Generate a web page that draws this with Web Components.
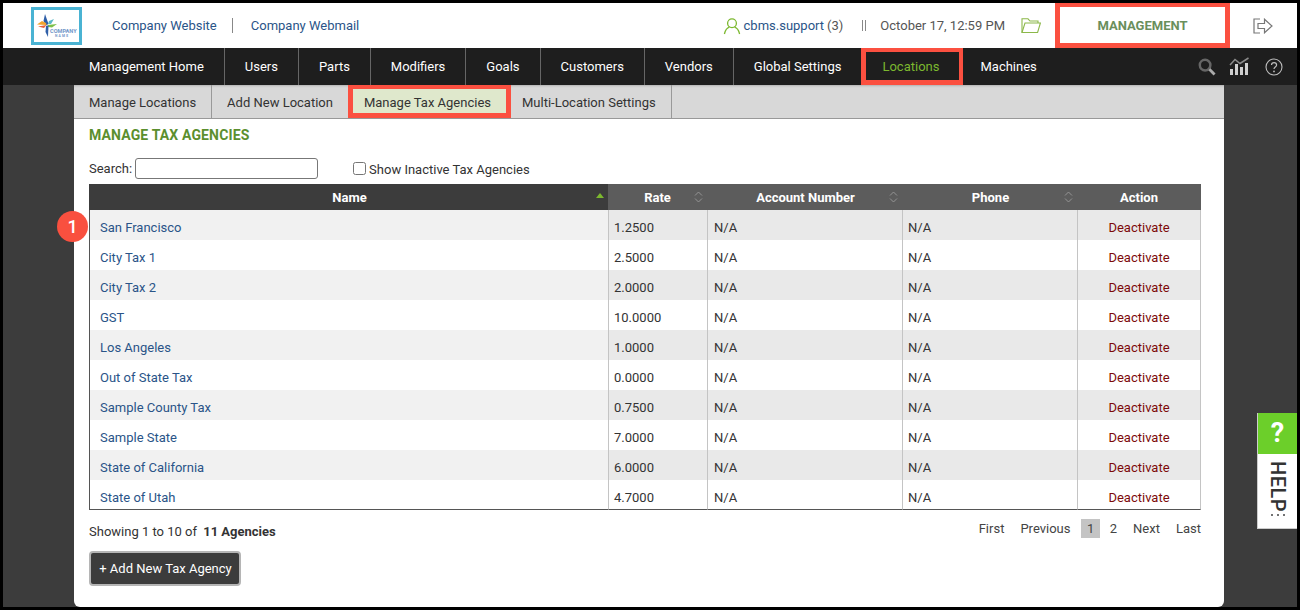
<!DOCTYPE html>
<html>
<head>
<meta charset="utf-8">
<title>Manage Tax Agencies</title>
<style>
    html, body { margin: 0; height: 100%; background: #000; }
    body { font-family: Roboto, "Liberation Sans", sans-serif; font-size: 13px; color: #333; overflow: hidden; }
</style>
</head>
<body>
<app-shell>
    <top-bar></top-bar>
    <main-nav></main-nav>
    <page-card>
        <sub-tabs></sub-tabs>
        <tax-agencies></tax-agencies>
    </page-card>
    <step-badge>1</step-badge>
    <help-tab></help-tab>
</app-shell>

<script>
function makeTemplate(html) {
    const t = document.createElement('template');
    t.innerHTML = html;
    return t;
}

class Base extends HTMLElement {
    constructor() {
        super();
        this.attachShadow({ mode: 'open' });
        this.shadowRoot.appendChild(this.constructor.template.content.cloneNode(true));
    }
}

class AppShell extends Base {
    static template = makeTemplate(`
<style>
    :host {
        display: flex;
        flex-direction: column;
        position: relative;
        box-sizing: border-box;
        width: 1300px;
        height: 610px;
        padding: 3px 3px 3px 3px;
        background: #000;
        overflow: hidden;
    }
</style>
<slot></slot>`);
}

class TopBar extends Base {
    static template = makeTemplate(`
<style>
    :host {
        display: flex;
        align-items: center;
        height: 45px;
        flex: none;
        background: #fff;
        font-size: 13px;
    }
    a { color: #2a5488; text-decoration: none; }
    .logo {
        box-sizing: border-box;
        width: 51px;
        height: 38px;
        margin: 0 30px 0 28px;
        border: 3px solid #4ab3d3;
        background: #fff;
        display: block;
    }
    .sep { width: 1px; height: 15px; background: #888; margin: 0 18px 0 15px; }
    .spacer { flex: 1; }
    .user { display: flex; align-items: center; color: #2a5488; }
    .user svg { margin-right: 3px; }
    .user span { color: #555; margin-left: 3px; }
    .bars { width: 4px; height: 11px; border-left: 1px solid #888; border-right: 1px solid #888; margin: 0 14px 0 19px; box-sizing: border-box; }
    .date { color: #555; }
    .folder { margin: 0 14px 0 16px; display: block; }
    .mode {
        box-sizing: border-box;
        width: 175px;
        height: 45px;
        border: solid #fb5040;
        border-width: 4px 5px 5px 5px;
        color: #6a8f5c;
        font-weight: 700;
        display: flex;
        align-items: center;
        justify-content: center;
    }
    .logout { margin: 0 24px 0 23px; display: block; }
</style>
<svg class="logo" viewBox="0 0 45 32" aria-hidden="true">
    <path d="M11 4 L14.5 14 L12 15.5 L9.5 11 Z" fill="#2f5fa8"/>
    <path d="M3 14.5 L8 11 L12 13 L12.5 15 Z" fill="#f2a32e"/>
    <path d="M4 16.5 L12.5 15 L10 18 Z" fill="#e4603c"/>
    <path d="M13.5 15 L23 14 L18 17.5 L14 17 Z" fill="#7cc04a"/>
    <path d="M15 11 L20 9 L17 14 L14 14 Z" fill="#5bb8c8"/>
    <path d="M12 16 L14.5 15.5 L14 27 L11.5 22 Z" fill="#2f5fa8"/>
    <text x="16" y="23" font-family="Roboto, sans-serif" font-size="5.6" font-weight="700" fill="#6f95c8">COMPANY</text>
    <text x="21" y="26.6" font-family="Roboto, sans-serif" font-size="3.4" font-weight="700" letter-spacing="1.2" fill="#6f95c8">NAME</text>
</svg>
<a href="#">Company Website</a>
<div class="sep"></div>
<a href="#">Company Webmail</a>
<div class="spacer"></div>
<div class="user">
    <svg width="18" height="18" viewBox="0 0 18 18" fill="none" stroke="#7cb82f" stroke-width="1.3" aria-hidden="true">
        <circle cx="9" cy="6.2" r="4.4"/>
        <path d="M1.4 17 C2.4 12.6 5 10.6 6.4 10.2 M16.6 17 C15.6 12.6 13 10.6 11.6 10.2"/>
    </svg>
    cbms.support<span>(3)</span>
</div>
<div class="bars"></div>
<div class="date">October 17, 12:59 PM</div>
<svg class="folder" width="20" height="17" viewBox="0 0 20 17" fill="none" stroke="#8cb84a" stroke-width="1.1" aria-hidden="true">
    <path d="M1 15.5 V1.8 H7 L9 4 H17 V6"/>
    <path d="M1 15.5 L4 6 H19.4 L16.6 15.5 Z"/>
</svg>
<div class="mode">MANAGEMENT</div>
<svg class="logout" width="20" height="16" viewBox="0 0 20 16" fill="none" stroke="#777" stroke-width="1.2" aria-hidden="true">
    <path d="M7 1 H1 V15 H7"/>
    <path d="M5 5.5 H11.5 V1.2 L19 8 L11.5 14.8 V10.5 H5 Z"/>
</svg>`);
}

class MainNav extends Base {
    static template = makeTemplate(`
<style>
    :host {
        display: flex;
        align-items: stretch;
        flex: none;
        height: 37px;
        padding-left: 66px;
        background: #1e1e1e;
        font-size: 13px;
    }
    a {
        display: flex;
        align-items: center;
        padding: 0 20px;
        color: #fff;
        text-decoration: none;
        border-right: 1px solid #666;
    }
    a.active {
        box-sizing: border-box;
        padding: 0 20px 0 16px;
        border: solid #fb5040;
        border-width: 4px 4px 5px 5px;
        color: #7cb82f;
    }
    a.prev, a.last { border-right: 0; }
    a.last { padding-left: 17px; }
    .tools { margin-left: auto; display: flex; align-items: center; padding-right: 14px; }
    svg { display: block; }
    .s { margin-right: 13px; }
    .c { margin-right: 15px; }
</style>
<a href="#">Management Home</a>
<a href="#">Users</a>
<a href="#">Parts</a>
<a href="#">Modifiers</a>
<a href="#">Goals</a>
<a href="#">Customers</a>
<a href="#">Vendors</a>
<a href="#" class="prev">Global Settings</a>
<a href="#" class="active">Locations</a>
<a href="#" class="last">Machines</a>
<div class="tools">
    <svg class="s" width="18" height="18" viewBox="0 0 19 19" fill="none" aria-hidden="true">
        <circle cx="7.5" cy="7.5" r="5.6" stroke="#666" stroke-width="2.6"/>
        <path d="M12 12 L17.5 17.5" stroke="#aaa" stroke-width="3"/>
    </svg>
    <svg class="c" width="21" height="19" viewBox="0 0 21 19" aria-hidden="true">
        <path d="M1 8 L6 2.5 L11 6.5 L19.5 1" fill="none" stroke="#8a8a8a" stroke-width="1.5"/>
        <g fill="#cfcfcf">
            <rect x="1" y="12" width="3" height="6"/>
            <rect x="6" y="7" width="3" height="11"/>
            <rect x="11" y="10" width="3" height="8"/>
            <rect x="16" y="6" width="3" height="12"/>
        </g>
    </svg>
    <svg width="18" height="18" viewBox="0 0 18 18" aria-hidden="true">
        <circle cx="9" cy="9" r="8" fill="none" stroke="#bdbdbd" stroke-width="1.1"/>
        <path d="M6.5 7 C6.5 3.9 11.6 3.9 11.6 7 C11.6 9 9 9 9 11" fill="none" stroke="#bdbdbd" stroke-width="1.2"/>
        <circle cx="9" cy="13.4" r="0.9" fill="#bdbdbd"/>
    </svg>
</div>`);
}

class PageCard extends Base {
    static template = makeTemplate(`
<style>
    :host {
        display: block;
        flex: 1;
        background: #3c3c3c;
        padding: 0 73px 0 71px;
        min-height: 0;
    }
    .card {
        height: 100%;
        background: #fff;
        border-radius: 0 0 6px 6px;
        overflow: hidden;
    }
</style>
<div class="card"><slot></slot></div>`);
}

class SubTabs extends Base {
    static template = makeTemplate(`
<style>
    :host {
        display: flex;
        height: 34px;
        box-sizing: border-box;
        background: #d8d8d8;
        border-bottom: 1px solid #999;
        font-size: 13px;
        box-shadow: inset 0 3px 3px -3px #888;
    }
    a {
        display: flex;
        align-items: center;
        padding: 2px 15px 0;
        color: #333;
        text-decoration: none;
        border-right: 1px solid #999;
    }
    a.active {
        box-sizing: border-box;
        height: 33px;
        margin-left: -1px;
        padding: 2px 15px 0 11px;
        border: 5px solid #fb5040;
        border-top-width: 4px;
        background: #dfe8cc;
    }
    a.next { padding-left: 11px; }
</style>
<a href="#">Manage Locations</a>
<a href="#">Add New Location</a>
<a href="#" class="active">Manage Tax Agencies</a>
<a href="#" class="next">Multi-Location Settings</a>`);
}

const AGENCIES = [
    ['San Francisco', '1.2500'],
    ['City Tax 1', '2.5000'],
    ['City Tax 2', '2.0000'],
    ['GST', '10.0000'],
    ['Los Angeles', '1.0000'],
    ['Out of State Tax', '0.0000'],
    ['Sample County Tax', '0.7500'],
    ['Sample State', '7.0000'],
    ['State of California', '6.0000'],
    ['State of Utah', '4.7000'],
];

const SORT_ICON = `<svg class="sort" width="9" height="12" viewBox="0 0 9 12" fill="none" stroke="#9a9a9a" stroke-width="0.9" aria-hidden="true"><path d="M1 4.5 L4.5 1 L8 4.5 M1 7.5 L4.5 11 L8 7.5"/></svg>`;

class TaxAgencies extends Base {
    static template = makeTemplate(`
<style>
    :host { display: block; padding: 0 23px 0 15px; font-size: 13px; color: #333; }
    h1 {
        margin: 0;
        padding-top: 8px;
        height: 24px;
        font-size: 14px;
        line-height: 17px;
        font-weight: 700;
        letter-spacing: 0.15px;
        color: #5b8f2e;
    }
    .filters { display: flex; align-items: center; height: 23px; margin-top: 6px; }
    .filters input[type=text] {
        box-sizing: border-box;
        width: 183px;
        height: 21px;
        margin: 0 0 0 3px;
        border: 1px solid #777;
        border-radius: 3px;
        padding: 0;
    }
    .filters label { display: flex; align-items: center; margin-left: 35px; padding-top: 2px; }
    .filters input[type=checkbox] { width: 13px; height: 13px; margin: -3px 3px 0 0; }
    table {
        width: 1112px;
        margin-top: 4px;
        border-collapse: separate;
        border-spacing: 0;
        table-layout: fixed;
        font-size: 13px;
    }
    th {
        height: 26px;
        padding: 0;
        background: #5c5c5c;
        color: #fff;
        font-weight: 700;
        position: relative;
    }
    th.name { background: #3c3c3c; }
    th.nudge { padding-left: 2px; }
    th svg { position: absolute; right: 4px; top: 7px; }
    th .up {
        position: absolute;
        right: 4px;
        top: 9px;
        border: 4px solid transparent;
        border-top: 0;
        border-bottom: 5px solid #7cb82f;
    }
    td {
        height: 30px;
        padding: 4px 0 0 5px;
        box-sizing: border-box;
        border-left: 1px solid #c4c4c4;
    }
    td.name { padding-left: 10px; border-left: 1px solid #555; }
    td.acct { padding-left: 6px; }
    td.action { text-align: center; padding-left: 0; border-right: 1px solid #c4c4c4; }
    tr:nth-child(odd) td { background: #e9e9e9; }
    tr:nth-child(odd) td.name { background: #f1f1f1; }
    tbody tr:last-child td { border-bottom: 1px solid #555; padding-top: 5px; }
    td a { color: #2a5488; text-decoration: none; }
    td.action a { color: #7d0a0a; }
    .foot { display: flex; justify-content: space-between; align-items: flex-start; margin-top: 10px; }
    .count { padding-top: 4px; }
    .count b { margin-left: 3px; }
    .pager { display: flex; align-items: center; gap: 16px; color: #444; margin-top: -1px; }
    .pager span.on { background: #c4c4c4; padding: 1px 5.5px; margin: 0 -6px 0 -5px; line-height: 17px; }
    button {
        display: block;
        margin-top: 12px;
        box-sizing: border-box;
        width: 152px;
        height: 35px;
        padding: 0 0 0 1px;
        border: 2px solid #b5b5b5;
        border-radius: 4px;
        background: #3c3c3c;
        color: #fff;
        font: inherit;
    }
</style>
<h1>MANAGE TAX AGENCIES</h1>
<div class="filters">
    <span>Search:</span><input type="text" aria-label="Search">
    <label><input type="checkbox">Show Inactive Tax Agencies</label>
</div>
<table>
    <colgroup><col style="width:519px"><col style="width:99px"><col style="width:195px"><col style="width:175px"><col style="width:124px"></colgroup>
    <thead>
        <tr>
            <th class="name nudge">Name<span class="up"></span></th>
            <th>Rate${SORT_ICON}</th>
            <th class="nudge">Account Number${SORT_ICON}</th>
            <th class="nudge">Phone${SORT_ICON}</th>
            <th>Action</th>
        </tr>
    </thead>
    <tbody>
        ${AGENCIES.map(a => `<tr>
            <td class="name"><a href="#">${a[0]}</a></td>
            <td>${a[1]}</td>
            <td class="acct">N/A</td>
            <td>N/A</td>
            <td class="action"><a href="#">Deactivate</a></td>
        </tr>`).join('')}
    </tbody>
</table>
<div class="foot">
    <div class="count">Showing 1 to 10 of <b>11 Agencies</b></div>
    <div class="pager"><span>First</span><span>Previous</span><span class="on">1</span><span>2</span><span>Next</span><span>Last</span></div>
</div>
<button>+ Add New Tax Agency</button>`);
}

class StepBadge extends Base {
    static template = makeTemplate(`
<style>
    :host {
        position: absolute;
        left: 57px;
        top: 211px;
        width: 31px;
        height: 31px;
        border-radius: 50%;
        background: #f9503f;
        color: #fff;
        font-size: 18px;
        font-weight: 500;
        display: flex;
        align-items: center;
        justify-content: center;
    }
</style>
<slot></slot>`);
}

class HelpTab extends Base {
    static template = makeTemplate(`
<style>
    :host {
        position: absolute;
        left: 1257px;
        top: 413px;
        width: 40px;
        height: 116px;
        box-sizing: border-box;
        background: #fff;
        border-left: 1px solid #ccc;
        border-bottom: 1px solid #ccc;
        display: block;
    }
    .q {
        height: 41px;
        background: #6ccf2a;
        color: #fff;
        font: 700 27px/41px Roboto, sans-serif;
        text-align: center;
    }
    .t {
        writing-mode: vertical-rl;
        width: 39px;
        padding-top: 7px;
        box-sizing: border-box;
        color: #333;
        font: 500 20px/39px Roboto, sans-serif;
        letter-spacing: 0.5px;
    }
    .dots { display: flex; gap: 4px; margin: 2px 0 0 13px; }
    .dots i { width: 2px; height: 2px; background: #444; border-radius: 50%; }
</style>
<div class="q">?</div>
<div class="t">HELP</div>
<div class="dots"><i></i><i></i><i></i></div>`);
}

customElements.define('app-shell', AppShell);
customElements.define('top-bar', TopBar);
customElements.define('main-nav', MainNav);
customElements.define('page-card', PageCard);
customElements.define('sub-tabs', SubTabs);
customElements.define('tax-agencies', TaxAgencies);
customElements.define('step-badge', StepBadge);
customElements.define('help-tab', HelpTab);
</script>
</body>
</html>
